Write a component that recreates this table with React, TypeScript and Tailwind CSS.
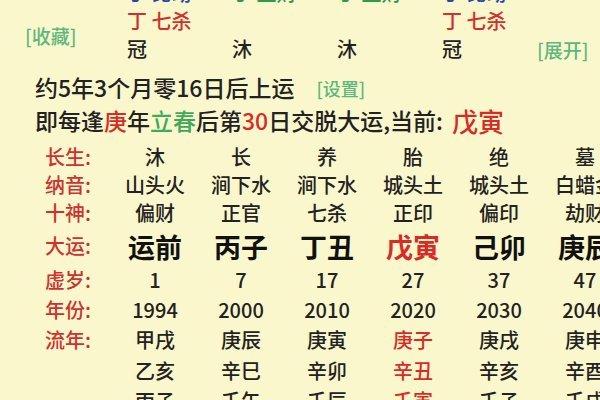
import React from "react";

type Cell = { text: string; red?: boolean };

const ROWS: { label: string; h: string; big?: boolean; cells: Cell[] }[] = [
  { label: "长生:", h: "h-[28px]", cells: ["沐", "长", "养", "胎", "绝", "墓"].map(t => ({ text: t })) },
  { label: "纳音:", h: "h-[28px]", cells: ["山头火", "涧下水", "涧下水", "城头土", "城头土", "白蜡金"].map(t => ({ text: t })) },
  { label: "十神:", h: "h-[28px]", cells: ["偏财", "正官", "七杀", "正印", "偏印", "劫财"].map(t => ({ text: t })) },
  {
    label: "大运:",
    h: "h-[38px]",
    big: true,
    cells: [
      { text: "运前" },
      { text: "丙子" },
      { text: "丁丑" },
      { text: "戊寅", red: true },
      { text: "己卯" },
      { text: "庚辰" },
    ],
  },
  { label: "虚岁:", h: "h-[30px]", cells: ["1", "7", "17", "27", "37", "47"].map(t => ({ text: t })) },
  { label: "年份:", h: "h-[30px]", cells: ["1994", "2000", "2010", "2020", "2030", "2040"].map(t => ({ text: t })) },
  {
    label: "流年:",
    h: "h-[30px]",
    cells: ["甲戌", "庚辰", "庚寅", "庚子", "庚戌", "庚申"].map((t, i) => ({ text: t, red: i === 3 })),
  },
  {
    label: "",
    h: "h-[31px]",
    cells: ["乙亥", "辛巳", "辛卯", "辛丑", "辛亥", "辛酉"].map((t, i) => ({ text: t, red: i === 3 })),
  },
  {
    label: "",
    h: "h-[30px]",
    cells: ["丙子", "壬午", "壬辰", "壬寅", "壬子", "壬戌"].map((t, i) => ({ text: t, red: i === 3 })),
  },
];

export default function App() {
  return (
    <div
      className="w-[600px] h-[400px] overflow-hidden bg-[#fbf7cc] text-[#222] font-medium"
      style={{ fontFamily: '"Noto Sans CJK SC", "Noto Sans", sans-serif' }}
    >
      {/* top of the chart, first row cut off */}
      <div className="grid grid-cols-[127px_105px_105px_105px_105px_1fr] grid-rows-[28px_28px_28px] mt-[-21px] text-[20px] leading-none">
        <div />
        <div className="flex items-start pt-[4px] text-[#2846a8]">丁 比劫</div>
        <div className="flex items-start pt-[4px] text-[#2e9a4c]">丁 正财</div>
        <div className="flex items-start pt-[4px] text-[#2e9a4c]">丁 正财</div>
        <div className="flex items-start pt-[4px] text-[#2846a8]">丁 比劫</div>
        <div />

        <div className="row-span-2 flex items-center pl-[25px] text-[19px] text-[#5cb87c]">[收藏]</div>
        <div className="flex items-center text-[#d3302c]">丁 七杀</div>
        <div />
        <div />
        <div className="flex items-center text-[#d3302c]">丁 七杀</div>
        <div />

        <div className="flex items-center">冠</div>
        <div className="flex items-center">沐</div>
        <div className="flex items-center">沐</div>
        <div className="flex items-center">冠</div>
        <div className="flex items-center ml-[-10px] text-[19px] text-[#5cb87c]">[展开]</div>
      </div>

      {/* start of luck */}
      <div className="mt-[8px] pl-[35px] leading-none">
        <div className="h-[33px] flex items-center text-[23px]">
          约5年3个月零16日后上运
          <span className="ml-[22px] text-[18px] text-[#5cb87c]">[设置]</span>
        </div>
        <div className="h-[33px] flex items-center text-[23px]">
          即每逢<span className="text-[#d92b26]">庚</span>年<span className="text-[#3fa95c]">立春</span>后第
          <span className="text-[#d92b26]">30</span>日交脱大运,当前:
          <span className="ml-[9px] text-[26px] text-[#d92b26]">戊寅</span>
        </div>
      </div>

      {/* luck table */}
      <div className="mt-[6px] w-[628px] grid grid-cols-[112px_repeat(6,86px)] leading-none">
        {ROWS.map((row, r) => (
          <React.Fragment key={r}>
            <div className={`${row.h} flex items-center pl-[45px] text-[20px] text-[#cc3330]`}>{row.label}</div>
            {row.cells.map((c, i) => (
              <div
                key={i}
                className={`${row.h} flex items-center justify-center whitespace-nowrap ${
                  row.big ? "text-[27px] font-bold" : "text-[20px]"
                } ${c.red ? "text-[#d92b26]" : row.big ? "text-[#111]" : "text-[#222]"}`}
              >
                {c.text}
              </div>
            ))}
          </React.Fragment>
        ))}
      </div>
    </div>
  );
}
